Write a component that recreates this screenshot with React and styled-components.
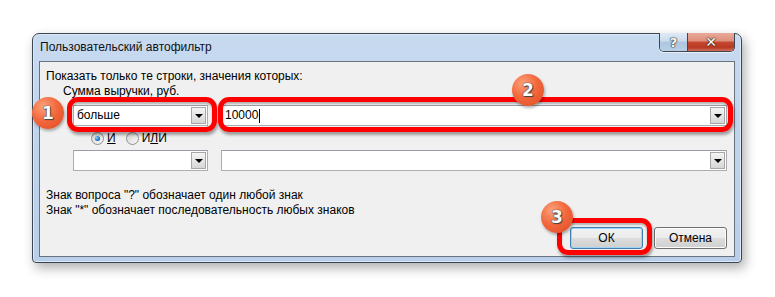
import React from 'react';
import styled, { createGlobalStyle, css } from 'styled-components';

const GlobalStyle = createGlobalStyle`
  body {
    margin: 0;
    background: #ffffff;
    font-family: "Liberation Sans", Arial, sans-serif;
  }
`;

const Page = styled.div`
  padding: 33px 0 0 32px;
  height: 297px;
  box-sizing: border-box;
`;

const Dialog = styled.div`
  width: 710px;
  height: 230px;
  box-sizing: border-box;
  display: flex;
  flex-direction: column;
  padding: 0 6px 5px 6px;
  border: 1px solid #3b4654;
  border-radius: 7px 7px 4px 4px;
  background: linear-gradient(to bottom, #c8daf0 0%, #bfd4ed 40%, #b9cfe9 100%);
  box-shadow: 3px 5px 12px rgba(0, 0, 0, 0.32), inset 0 0 0 1px #dce8f6;
`;

const TitleBar = styled.div`
  height: 27px;
  display: flex;
  align-items: flex-start;
`;

const Title = styled.div`
  margin: 6px 0 0 1px;
  font-size: 12px;
  line-height: 15px;
  color: #111;
`;

const Controls = styled.div`
  margin: -1px 0 0 auto;
  display: flex;
  border: 1px solid #3e4650;
  border-top: none;
  border-radius: 0 0 5px 5px;
  overflow: hidden;
  box-shadow: 0 1px 0 rgba(255, 255, 255, 0.6);
`;

const CaptionButton = styled.div`
  height: 18px;
  display: flex;
  align-items: center;
  justify-content: center;
  font-family: "DejaVu Sans", sans-serif;
  font-weight: bold;
  color: #fff;
  text-shadow: 0 0 1px #222, 0 0 1px #222, 0 0 2px #333;
  ${({ $variant }) =>
    $variant === 'close'
      ? css`
          width: 46px;
          font-size: 14px;
          background: linear-gradient(to bottom, #e9ab9b 0%, #dd8e7b 45%, #c8472f 50%, #b83a24 80%, #d2705a 100%);
        `
      : css`
          width: 27px;
          font-size: 13px;
          border-right: 1px solid #3e4650;
          background: linear-gradient(to bottom, #dfe9f5 0%, #cbdcee 45%, #aec6e0 50%, #b8cfe7 100%);
        `}
`;

const Client = styled.div`
  flex: 1;
  display: flex;
  flex-direction: column;
  border: 1px solid #69737e;
  background: #f0f0f0;
  font-size: 12px;
  line-height: 15px;
  color: #000;
`;

const Prompt = styled.div`
  margin: 7px 0 0 6px;
`;

const FieldCaption = styled.div`
  padding-left: 23px;
`;

const FilterRow = styled.div`
  display: flex;
  gap: 13px;
  padding-left: 33px;
  margin-top: ${({ $top }) => $top}px;
`;

const Slot = styled.div`
  position: relative;
  display: flex;
`;

const ComboBox = styled.div`
  width: ${({ $width }) => $width}px;
  height: 21px;
  box-sizing: border-box;
  display: flex;
  align-items: center;
  background: #fff;
  border: 1px solid #abadb3;
  border-top-color: #9a9da4;
`;

const ComboText = styled.span`
  padding-left: 3px;
  flex: 1;
  display: flex;
  align-items: center;
`;

const Caret = styled.span`
  display: inline-block;
  width: 1px;
  height: 14px;
  background: #000;
  margin-left: 1px;
`;

const DropButton = styled.div`
  width: 15px;
  height: 17px;
  margin-right: 1px;
  box-sizing: border-box;
  display: flex;
  align-items: center;
  justify-content: center;
  border: 1px solid #a7a7a7;
  background: linear-gradient(to bottom, #f4f4f4 0%, #e6e6e6 50%, #d6d6d6 100%);

  &::after {
    content: '';
    border-left: 4px solid transparent;
    border-right: 4px solid transparent;
    border-top: 4px solid #000;
  }
`;

const RadioRow = styled.div`
  display: flex;
  gap: 10px;
  padding-left: 51px;
  margin-top: 5px;
`;

const RadioOption = styled.label`
  display: inline-flex;
  align-items: center;
  gap: 3px;
  color: #000;
`;

const RadioCircle = styled.span`
  width: 11px;
  height: 11px;
  border-radius: 50%;
  border: 1px solid #8e8f8f;
  display: inline-flex;
  align-items: center;
  justify-content: center;
  background: linear-gradient(135deg, #d4d4d4, #f7f7f7);

  ${({ $checked }) =>
    $checked &&
    css`
      &::after {
        content: '';
        width: 5px;
        height: 5px;
        border-radius: 50%;
        background: radial-gradient(circle at 35% 35%, #8fd0ff, #1a6fbf 60%, #0d3f7a);
      }
    `}
`;

const AccessKey = styled.span`
  text-decoration: underline;
`;

const Hint = styled.div`
  padding-left: 6px;
  margin-top: ${({ $top }) => $top || 0}px;
`;

const ButtonRow = styled.div`
  display: flex;
  justify-content: flex-end;
  gap: 11px;
  padding-right: 7px;
  margin-top: 9px;
`;

const Button = styled.div`
  width: 73px;
  height: 22px;
  box-sizing: border-box;
  display: flex;
  align-items: center;
  justify-content: center;
  border-radius: 3px;
  font-size: 12px;
  color: #000;
  border: 1px solid ${({ $primary }) => ($primary ? '#3c7fb1' : '#707070')};
  background: linear-gradient(to bottom, #f2f2f2 0%, #ebebeb 50%, #dddddd 51%, #cfcfcf 100%);
  box-shadow: inset 0 0 0 1px ${({ $primary }) => ($primary ? '#9fd5f4' : '#fcfcfc')};
`;

const Highlight = styled.div`
  position: absolute;
  top: ${({ $t }) => $t}px;
  left: ${({ $l }) => $l}px;
  right: ${({ $r }) => $r}px;
  bottom: ${({ $b }) => $b}px;
  border: 5px solid #ff0000;
  border-radius: 11px;
  box-shadow: 1px 3px 3px rgba(0, 0, 0, 0.35), inset 0 2px 2px rgba(0, 0, 0, 0.25);
  pointer-events: none;
`;

const Badge = styled.div`
  position: absolute;
  top: ${({ $t }) => $t}px;
  left: ${({ $l }) => $l}px;
  width: 32px;
  height: 32px;
  border-radius: 50%;
  display: flex;
  align-items: center;
  justify-content: center;
  background: radial-gradient(circle at 35% 30%, #fba27a 0%, #f3683e 45%, #dd4a22 100%);
  box-shadow: 1px 2px 3px rgba(0, 0, 0, 0.3);
  font-family: "DejaVu Sans", sans-serif;
  font-weight: bold;
  font-size: 17px;
  color: #fff;
  text-shadow: 0 0 1px #333, 0 0 1px #333, 1px 1px 1px #444;
  z-index: 2;
`;

const Combo = ({ width, children }) => (
  <ComboBox $width={width}>
    <ComboText>{children}</ComboText>
    <DropButton />
  </ComboBox>
);

const App = () => (
  <>
    <GlobalStyle />
    <Page>
      <Dialog>
        <TitleBar>
          <Title>Пользовательский автофильтр</Title>
          <Controls>
            <CaptionButton>?</CaptionButton>
            <CaptionButton $variant="close">✕</CaptionButton>
          </Controls>
        </TitleBar>
        <Client>
          <Prompt>Показать только те строки, значения которых:</Prompt>
          <FieldCaption>Сумма выручки, руб.</FieldCaption>

          <FilterRow $top={6}>
            <Slot>
              <Combo width={135}>больше</Combo>
              <Highlight $t={-8} $l={-6} $r={-9} $b={-6} />
              <Badge $t={-8} $l={-41}>1</Badge>
            </Slot>
            <Slot>
              <Combo width={506}>
                10000
                <Caret />
              </Combo>
              <Highlight $t={-8} $l={-3} $r={-6} $b={-6} />
              <Badge $t={-31} $l={291}>2</Badge>
            </Slot>
          </FilterRow>

          <RadioRow>
            <RadioOption>
              <RadioCircle $checked />
              <AccessKey>И</AccessKey>
            </RadioOption>
            <RadioOption>
              <RadioCircle />
              <span>
                И<AccessKey>Л</AccessKey>И
              </span>
            </RadioOption>
          </RadioRow>

          <FilterRow $top={4}>
            <Combo width={135} />
            <Combo width={506} />
          </FilterRow>

          <Hint $top={17}>Знак вопроса "?" обозначает один любой знак</Hint>
          <Hint>Знак "*" обозначает последовательность любых знаков</Hint>

          <ButtonRow>
            <Slot>
              <Button $primary>ОК</Button>
              <Highlight $t={-9} $l={-13} $r={-9} $b={-6} />
              <Badge $t={-26} $l={-29}>3</Badge>
            </Slot>
            <Button>Отмена</Button>
          </ButtonRow>
        </Client>
      </Dialog>
    </Page>
  </>
);

export default App;
